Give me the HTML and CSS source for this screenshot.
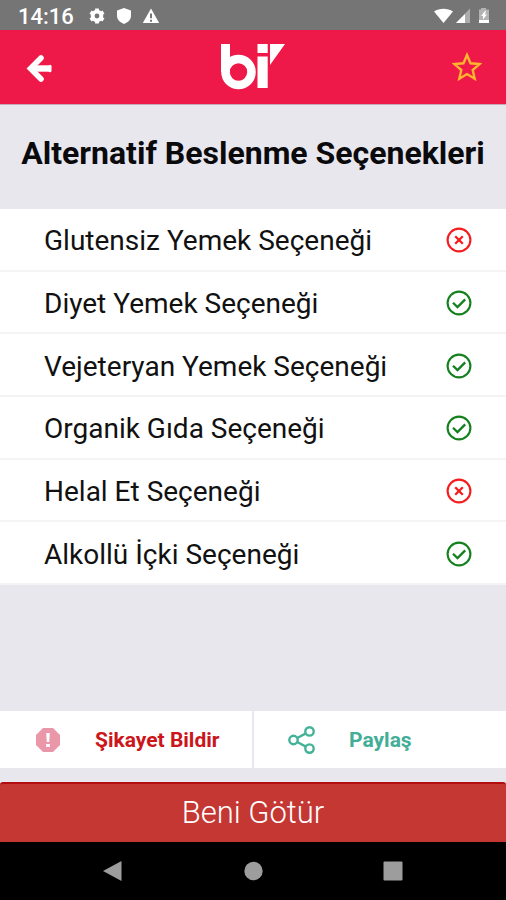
FILE: index.html
```html
<!DOCTYPE html>
<html lang="tr">
<head>
<meta charset="utf-8">
<meta name="viewport" content="width=device-width, initial-scale=1">
<title>Alternatif Beslenme Seçenekleri</title>
<link rel="stylesheet" href="styles.css">
</head>
<body>
<svg class="defs" aria-hidden="true">
  <symbol id="no" viewBox="0 0 26 26"><g fill="none" stroke="currentColor"><circle cx="13" cy="13" r="11.4" stroke-width="2.1"/><path d="M9.2 9.2l7.6 7.6M16.8 9.2l-7.6 7.6" stroke-width="2.3"/></g></symbol>
  <symbol id="yes" viewBox="0 0 26 26"><g fill="none" stroke="currentColor"><circle cx="13" cy="13" r="11.4" stroke-width="2.1"/><path d="M7 12.700l4.500 4.400 7.700-7.700" stroke-width="2.300"/></g></symbol>
</svg>
<div class="status">
  <span class="clock">14:16</span>
  <svg class="status-left" viewBox="0 0 72 18" fill="#fff" aria-hidden="true">
    <circle cx="9" cy="9" r="4.3" fill="none" stroke="#fff" stroke-width="3.8"/>
    <g stroke="#fff" stroke-width="3.8"><path d="M9 1.500v3M9 13.500v3M2.500 5.200l2.600 1.500M12.900 11.300l2.600 1.500M2.500 12.800l2.600-1.500M12.900 6.700l2.600-1.500"/></g>
    <path d="M36 1l7 2.600v5.200c0 3.800-3 6.800-7 8.200-4-1.400-7-4.400-7-8.200V3.600z"/>
    <path fill-rule="evenodd" d="M63 1.500l8.200 14.500H54.800zM62 6.500v4.800h2V6.500zm0 6.200v2h2v-2z"/>
  </svg>
  <svg class="status-right" viewBox="0 0 58 18" fill="#fff" aria-hidden="true">
    <path d="M1 4.500C6.500.7 14.500.7 20 4.500L10.500 16z"/>
    <path d="M37 1.500V16H23z" opacity=".4"/><path d="M32 7v9h-9z"/>
    <path d="M48 2.500V1h5v1.500h3V16H46V2.500z" opacity=".45"/>
    <path d="M46 13h10v3H46zM52 4l-4 5h2v3.500l4-5h-2l1-3.500z"/>
  </svg>
</div>
<header class="top">
  <button class="icon-button" type="button" aria-label="Geri">
    <svg width="30" height="30" viewBox="0 0 30 30" fill="none" stroke="#fff" stroke-width="5.600"><path d="M17 6L6.500 16.500 17 27" stroke-linecap="round"/><path d="M7 16.500h19.500" stroke-width="6.400"/><path d="M26 14.300v4.400" stroke-width="3" stroke-linecap="round"/></svg>
  </button>
  <svg class="logo" viewBox="0 0 66 46" role="img" aria-label="bi">
    <path fill="#fff" d="M1 0h9v28H1zM37.500 12.500h10.200V44H37.500zM37.500 0h10.200v9H37.500zM50 0h15L50 21z"/>
    <circle cx="18.500" cy="28" r="13" fill="none" stroke="#fff" stroke-width="8.600"/>
  </svg>
  <button class="icon-button" type="button" aria-label="Favorilere ekle">
    <svg width="30" height="30" viewBox="0 0 30 30" fill="none" stroke="#ffb52e" stroke-width="2.400"><path d="M15 3l3.500 8.300 9 .8-6.800 5.900 2 8.800L15 22.100l-7.700 4.700 2-8.800-6.800-5.900 9-.8z"/></svg>
  </button>
</header>
<main class="content">
  <h1 class="title">Alternatif Beslenme Seçenekleri</h1>
  <ul class="options">
    <li><span>Glutensiz Yemek Seçeneği</span><svg class="mark no" role="img" aria-label="Yok"><use href="#no"/></svg></li>
    <li><span>Diyet Yemek Seçeneği</span><svg class="mark yes" role="img" aria-label="Var"><use href="#yes"/></svg></li>
    <li><span>Vejeteryan Yemek Seçeneği</span><svg class="mark yes" role="img" aria-label="Var"><use href="#yes"/></svg></li>
    <li><span>Organik Gıda Seçeneği</span><svg class="mark yes" role="img" aria-label="Var"><use href="#yes"/></svg></li>
    <li><span>Helal Et Seçeneği</span><svg class="mark no" role="img" aria-label="Yok"><use href="#no"/></svg></li>
    <li><span>Alkollü İçki Seçeneği</span><svg class="mark yes" role="img" aria-label="Var"><use href="#yes"/></svg></li>
  </ul>
</main>
<div class="actions">
  <button class="action report" type="button">
    <svg viewBox="0 0 28 28" aria-hidden="true"><path fill="#ea98a9" d="M9 2h10l7 7v10l-7 7H9l-7-7V9z"/><path fill="#fff" d="M12.200 7h3.600l-.6 9h-2.400zM12.200 18h3.600v3h-3.600z"/></svg>
    <span>Şikayet Bildir</span>
  </button>
  <button class="action share" type="button">
    <svg viewBox="0 0 28 28" fill="none" stroke="#43b298" stroke-width="2.400" aria-hidden="true"><circle cx="5.500" cy="14" r="4.200"/><circle cx="21.500" cy="5.400" r="4.200"/><circle cx="21.500" cy="22.600" r="4.200"/><path d="M9.200 12l8.700-4.600M9.200 16l8.700 4.600"/></svg>
    <span>Paylaş</span>
  </button>
</div>
<button class="go" type="button">Beni Götür</button>
<nav class="system">
  <button type="button" aria-label="Geri"><svg viewBox="0 0 20 20"><path d="M0 10L18.500 0v20z"/></svg></button>
  <button type="button" aria-label="Ana ekran"><svg viewBox="0 0 20 20"><circle cx="10.500" cy="10" r="9.200"/></svg></button>
  <button type="button" aria-label="Son uygulamalar"><svg viewBox="0 0 20 20"><rect x=".5" y=".5" width="19" height="19" rx="1"/></svg></button>
</nav>
</body>
</html>
```
FILE: styles.css
```css
* {
  box-sizing: border-box;
}

body {
  margin: 0;
  min-height: 100vh;
  display: flex;
  flex-direction: column;
  background: #e8e7ed;
  color: #111;
  font-family: Roboto, "Liberation Sans", sans-serif;
}

button {
  margin: 0;
  padding: 0;
  border: 0;
  background: none;
  font-family: inherit;
}

svg {
  display: block;
}

.defs {
  position: absolute;
  width: 0;
  height: 0;
}

.status {
  height: 30px;
  padding: 4px 15px 0 18px;
  display: flex;
  align-items: center;
  background: #757575;
  color: #fff;
}

.clock {
  font-size: 22px;
  font-weight: 500;
  line-height: 26px;
}

.status-left {
  width: 72px;
  height: 18px;
  margin: 0 0 2px 14px;
}

.status-right {
  width: 58px;
  height: 18px;
  margin: 0 0 2px auto;
}

.top {
  height: 75px;
  padding: 0 24px;
  display: grid;
  grid-template-columns: 1fr auto 1fr;
  align-items: center;
  background: #ee1849;
  border-bottom: 1px solid #c9a9b6;
}

.icon-button {
  width: 30px;
  height: 30px;
  display: grid;
  place-items: center;
}

.icon-button:last-child {
  justify-self: end;
}

.logo {
  width: 66px;
  height: 46px;
}

.content {
  flex: 1;
}

.title {
  margin: 0;
  padding: 28px 0 36px;
  font-size: 32px;
  font-weight: 700;
  line-height: 40px;
  text-align: center;
  white-space: nowrap;
  color: #0a0a0d;
}

.options {
  height: 376px;
  margin: 0;
  padding: 0;
  display: grid;
  grid-auto-rows: 1fr;
  list-style: none;
  background: #fff;
}

.options li {
  padding: 2px 34px 0 44px;
  display: flex;
  align-items: center;
  justify-content: space-between;
  border-bottom: 2px solid #f4f4f5;
  font-size: 28px;
  font-weight: 400;
  line-height: 32px;
}

.options span {
  padding-top: 2px;
}

.mark {
  width: 26px;
  height: 26px;
}

.no {
  color: #f51c20;
}

.yes {
  color: #15801e;
}

.actions {
  display: grid;
  grid-template-columns: 1fr 1fr;
  gap: 2px;
  margin-bottom: 14px;
}

.action {
  height: 57px;
  padding: 0 24px 0 34px;
  display: flex;
  align-items: center;
  gap: 33px;
  background: #fff;
  font-size: 21px;
  font-weight: 700;
  line-height: 28px;
  white-space: nowrap;
}

.action svg {
  width: 28px;
  height: 28px;
}

.report {
  color: #cb161b;
}

.share {
  color: #43ae97;
}

.go {
  height: 60px;
  border-top: 2px solid #b30d12;
  border-radius: 3px 3px 0 0;
  background: #c43733;
  color: #fff;
  font-size: 31px;
  font-weight: 300;
  line-height: 40px;
}

.system {
  height: 58px;
  padding: 0 43px;
  display: grid;
  grid-template-columns: repeat(3, 1fr);
  background: #000;
}

.system button {
  display: grid;
  place-items: center;
}

.system svg {
  width: 20px;
  height: 20px;
  fill: #9d9d9d;
}
```
